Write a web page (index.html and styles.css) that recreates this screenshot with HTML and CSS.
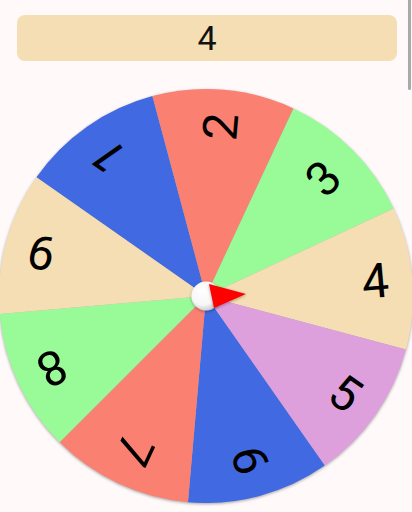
FILE: index.html
```html
<!DOCTYPE html>
<html>
<head>
<meta charset="utf-8">
<link rel="stylesheet" href="styles.css">
</head>
<body>
<div class="screen">
  <div class="result">4</div>
  <div class="wheel-wrap">
    <svg class="wheel" width="412" height="416" viewBox="-206 -208 412 416">
      <defs>
        <radialGradient id="hubg" cx="0.4" cy="0.35" r="0.7">
          <stop offset="0" stop-color="#ffffff"/>
          <stop offset="0.65" stop-color="#f6f6f6"/>
          <stop offset="1" stop-color="#c4c4c4"/>
        </radialGradient>
        <filter id="sh" x="-50%" y="-50%" width="200%" height="200%">
          <feDropShadow dx="0" dy="1" stdDeviation="1.5" flood-color="#000" flood-opacity="0.35"/>
        </filter>
      </defs>
      <g class="disc">
        <path fill="#4169E1" d="M0 0 L-169.56 -118.73 A207 207 0 0 1 -53.58 -199.95 Z"/>
        <path fill="#FA8072" d="M0 0 L-53.58 -199.95 A207 207 0 0 1 87.48 -187.61 Z"/>
        <path fill="#98FB98" d="M0 0 L87.48 -187.61 A207 207 0 0 1 187.61 -87.48 Z"/>
        <path fill="#F5DEB3" d="M0 0 L187.61 -87.48 A207 207 0 0 1 199.95 53.58 Z"/>
        <path fill="#DDA0DD" d="M0 0 L199.95 53.58 A207 207 0 0 1 118.73 169.56 Z"/>
        <path fill="#4169E1" d="M0 0 L118.73 169.56 A207 207 0 0 1 -18.04 206.21 Z"/>
        <path fill="#FA8072" d="M0 0 L-18.04 206.21 A207 207 0 0 1 -146.37 146.37 Z"/>
        <path fill="#98FB98" d="M0 0 L-146.37 146.37 A207 207 0 0 1 -206.21 18.04 Z"/>
        <path fill="#F5DEB3" d="M0 0 L-206.21 18.04 A207 207 0 0 1 -169.56 -118.73 Z"/>
      </g>
      <g class="labels">
        <text transform="rotate(-35) translate(0,-170) rotate(-90)">1</text>
        <text transform="rotate(5) translate(0,-170) rotate(-90)">2</text>
        <text transform="rotate(45) translate(0,-166) rotate(-90)">3</text>
        <text transform="rotate(85) translate(0,-170) rotate(-90)">4</text>
        <text transform="rotate(125) translate(0,-170) rotate(-90)">5</text>
        <text transform="rotate(165) translate(0,-170) rotate(-90)">6</text>
        <text transform="rotate(205) translate(0,-170) rotate(-90)">7</text>
        <text transform="rotate(245) translate(0,-170) rotate(-90)">8</text>
        <text transform="rotate(285) translate(0,-170) rotate(-90)">9</text>
      </g>
      <circle cx="0" cy="0" r="14.5" fill="url(#hubg)" filter="url(#sh)"/>
      <polygon points="3,-12 8,12 40,-2" fill="#ff0000" filter="url(#sh)"/>
    </svg>
  </div>
</div>
<div class="scroll-thumb"></div>
</body>
</html>
```
FILE: styles.css
```css
html, body {
  margin: 0;
  padding: 0;
  background: #FFFAF9;
  overflow: hidden;
}
.screen {
  display: flex;
  flex-direction: column;
  width: 412px;
  height: 512px;
}
.result {
  margin: 15px 15px 0 17px;
  height: 46px;
  background: #F5DEB3;
  border-radius: 8px;
  display: flex;
  align-items: center;
  justify-content: center;
  font-family: Roboto, "Noto Sans", sans-serif;
  font-size: 34px;
  line-height: 1;
  color: #111;
}
.wheel-wrap {
  margin-top: 27px;
  display: flex;
  justify-content: center;
}
.wheel {
  display: block;
  overflow: visible;
}
.disc {
  filter: drop-shadow(0 1px 1.5px rgba(0,0,0,0.35));
}
.labels text {
  font-family: Roboto, "Noto Sans", sans-serif;
  font-size: 48px;
  fill: #000;
  text-anchor: middle;
  dominant-baseline: central;
}
.scroll-thumb {
  position: fixed;
  top: 0;
  right: 1px;
  width: 3px;
  height: 90px;
  background: #a9a9a9;
  border-radius: 0 0 2px 2px;
}
```
